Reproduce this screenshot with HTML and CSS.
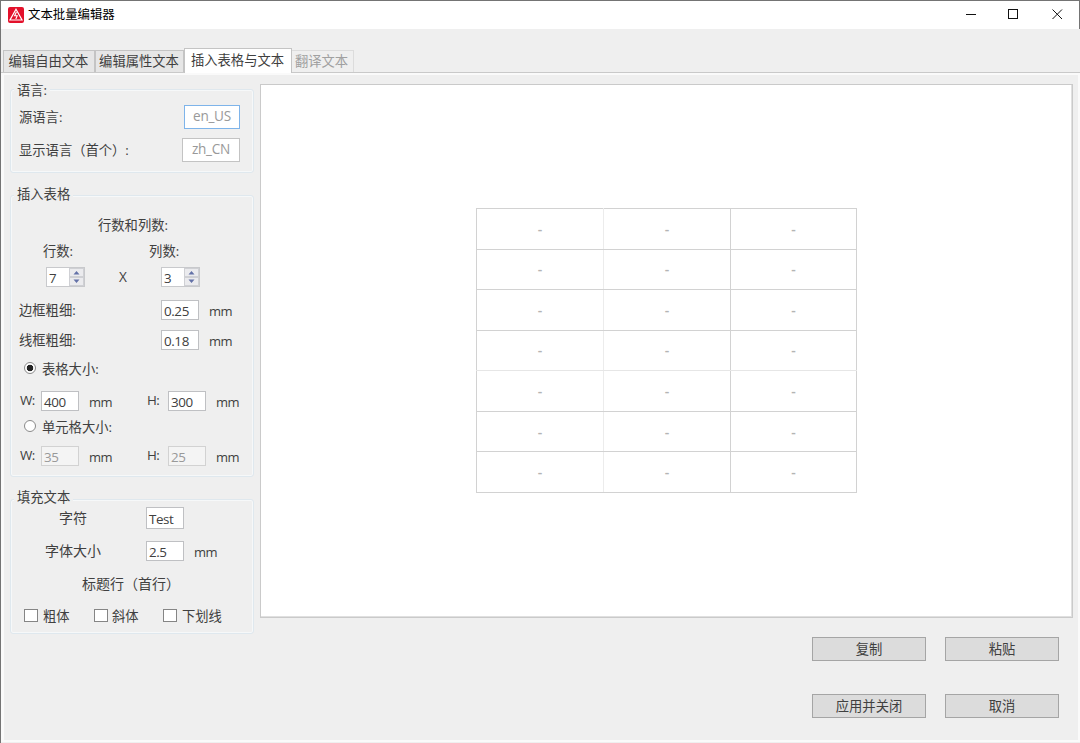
FILE: index.html
```html
<!DOCTYPE html>
<html lang="zh-CN">
<head>
    <meta charset="UTF-8">
    <meta name="viewport" content="width=device-width, initial-scale=1.0">
    <title>文本批量编辑器</title>
    <link rel="stylesheet" href="styles.css">
</head>
<body>
    <div class="window">
        <header class="titlebar">
            <svg class="logo" width="16" height="16" viewBox="0 0 16 16">
                <rect width="16" height="16" rx="2" fill="#e3112b"/>
                <path d="M8 2.2 L14 13 H2 Z" fill="none" stroke="#fff" stroke-width="1.2"/>
                <path d="M8.4 5 L6.6 8.8 H9.2 L7.8 12" fill="none" stroke="#fff" stroke-width="1.1"/>
            </svg>
            <span class="title">文本批量编辑器</span>
            <svg class="controls" width="98" height="12" viewBox="0 0 98 12" fill="none" stroke="#111">
                <path d="M0 6.5 H10"/>
                <rect x="42.5" y="1.5" width="9" height="9"/>
                <path d="M86.5 1.5 L96 11 M96 1.5 L86.5 11"/>
            </svg>
        </header>

        <nav class="tabs">
            <span class="tab tab-free">编辑自由文本</span>
            <span class="tab tab-attr">编辑属性文本</span>
            <span class="tab active">插入表格与文本</span>
            <span class="tab disabled">翻译文本</span>
        </nav>

        <main class="panel">
            <aside class="sidebar">
                <section class="group group-lang">
                    <h2>语言:</h2>
                    <div class="row lang">
                        <span>源语言:</span>
                        <span class="lang-box focused">en_US</span>
                    </div>
                    <div class="row lang">
                        <span>显示语言（首个）:</span>
                        <span class="lang-box wide">zh_CN</span>
                    </div>
                </section>

                <section class="group group-table">
                    <h2>插入表格</h2>
                    <div class="row heading">行数和列数:</div>
                    <div class="row counts-label"><span>行数:</span><span>列数:</span></div>
                    <div class="row counts">
                        <span class="spinner">
                            <span class="num">7</span>
                            <svg width="15" height="18" viewBox="0 0 15 18">
                                <path d="M0 0H15V18H0Z" fill="#cfd0d4"/>
                                <path d="M1 1H14V8H1Z M1 10H14V17H1Z" fill="#ebebee"/>
                                <path d="M4.5 6.5 L7.5 3 L10.5 6.5Z M4.5 11.5 L7.5 15 L10.5 11.5Z" fill="#6472a8"/>
                            </svg>
                        </span>
                        <span class="times">X</span>
                        <span class="spinner">
                            <span class="num">3</span>
                            <svg width="15" height="18" viewBox="0 0 15 18">
                                <path d="M0 0H15V18H0Z" fill="#cfd0d4"/>
                                <path d="M1 1H14V8H1Z M1 10H14V17H1Z" fill="#ebebee"/>
                                <path d="M4.5 6.5 L7.5 3 L10.5 6.5Z M4.5 11.5 L7.5 15 L10.5 11.5Z" fill="#6472a8"/>
                            </svg>
                        </span>
                    </div>
                    <div class="row thickness">
                        <span>边框粗细:</span><span class="field">0.25</span><span class="unit">mm</span>
                    </div>
                    <div class="row thickness">
                        <span>线框粗细:</span><span class="field">0.18</span><span class="unit">mm</span>
                    </div>
                    <div class="row option"><span class="radio checked"></span><span>表格大小:</span></div>
                    <div class="row size">
                        <span class="dim">W:</span><span class="field">400</span><span class="unit">mm</span>
                        <span class="dim">H:</span><span class="field">300</span><span class="unit">mm</span>
                    </div>
                    <div class="row option second"><span class="radio"></span><span>单元格大小:</span></div>
                    <div class="row size">
                        <span class="dim">W:</span><span class="field off">35</span><span class="unit">mm</span>
                        <span class="dim">H:</span><span class="field off">25</span><span class="unit">mm</span>
                    </div>
                </section>

                <section class="group group-fill">
                    <h2>填充文本</h2>
                    <div class="row fill chars"><span>字符</span><span class="field">Test</span></div>
                    <div class="row fill font-size">
                        <span>字体大小</span><span class="field">2.5</span><span class="unit">mm</span>
                    </div>
                    <div class="row header-row">标题行（首行）</div>
                    <div class="row checks">
                        <span class="check"></span><span>粗体</span>
                        <span class="check"></span><span>斜体</span>
                        <span class="check"></span><span>下划线</span>
                    </div>
                </section>
            </aside>

            <div class="content">
                <div class="preview">
                    <table>
                        <tr><td>-</td><td>-</td><td>-</td></tr>
                        <tr><td>-</td><td>-</td><td>-</td></tr>
                        <tr><td>-</td><td>-</td><td>-</td></tr>
                        <tr class="faint"><td>-</td><td>-</td><td>-</td></tr>
                        <tr><td>-</td><td>-</td><td>-</td></tr>
                        <tr><td>-</td><td>-</td><td>-</td></tr>
                        <tr><td>-</td><td>-</td><td>-</td></tr>
                    </table>
                </div>
                <div class="buttons">
                    <button type="button">复制</button>
                    <button type="button">粘贴</button>
                    <button type="button">应用并关闭</button>
                    <button type="button">取消</button>
                </div>
            </div>
        </main>
    </div>
</body>
</html>
```
FILE: styles.css
```css
* {
    box-sizing: border-box;
}

body {
    margin: 0;
    font-family: "Open Sans", "Noto Sans CJK SC", sans-serif;
    font-size: 13.3px;
    color: #404040;
    background-color: #efefef;
}

.window {
    width: 1080px;
    height: 743px;
    overflow: hidden;
    border-top: 1px solid #747474;
    border-left: 1px solid #747474;
    background-color: #efefef;
    white-space: nowrap;
}

.titlebar {
    display: flex;
    align-items: center;
    height: 28px;
    padding: 0 15px 0 7px;
    border-right: 1px solid #747474;
    background-color: #fff;
    color: #000;
}

.logo {
    margin-right: 4px;
}

.title {
    margin-top: -2px;
    font-size: 12.4px;
}

.controls {
    margin: -2px 0 0 auto;
}

/* tabs */
.tabs {
    display: flex;
    align-items: flex-end;
    height: 43px;
    margin-top: 1px;
    padding-left: 2px;
    border-bottom: 1px solid #c9c9c9;
}

.tab {
    height: 22px;
    padding-right: 1px;
    line-height: 20px;
    border: 1px solid #c4c4c4;
    border-bottom: 0;
    background-color: #e6e6e6;
    text-align: center;
}

.tab-free {
    width: 92px;
}

.tab-attr {
    width: 89px;
}

.tab.active {
    width: 108px;
    height: 25px;
    line-height: 23px;
    margin-bottom: -1px;
    background-color: #fff;
}

.tab.disabled {
    width: 62px;
    padding-right: 2px;
    border-color: #dcdcdc;
    border-left: 0;
    background-color: #efefef;
    color: #a0a0a0;
}

.panel {
    display: flex;
    height: 669px;
    border: 2px solid #fafafa;
    border-left-width: 3px;
}

/* left column */
.sidebar {
    width: 256px;
    padding: 14px 0 0 6px;
}

.group {
    width: 244px;
    border: 1px solid #dfe8ee;
    border-radius: 3px;
    box-shadow: inset 0 0 0 1px #f6f8f9;
}

.group h2 {
    width: fit-content;
    height: 18px;
    margin: -9px 0 0 3px;
    padding: 0 3px;
    background-color: #efefef;
    font-size: 13.3px;
    font-weight: normal;
    line-height: 18px;
}

.group-lang {
    height: 84px;
}

.group-table {
    height: 282px;
    margin-top: 22px;
}

.group-table h2 {
    margin-top: -11px;
}

.group-fill {
    height: 135px;
    margin-top: 22px;
}

.group-fill h2 {
    margin-top: -12px;
}

.row {
    display: flex;
    align-items: center;
    height: 20px;
    line-height: 18px;
}

.lang {
    justify-content: space-between;
    height: 24px;
    margin-top: 9px;
    padding: 0 13px 0 8px;
}

h2 + .lang {
    margin-top: 6px;
}

.lang-box {
    width: 56px;
    height: 24px;
    border: 1px solid #c3c3c3;
    background-color: #fff;
    color: #999;
    font-size: 13.6px;
    letter-spacing: -0.3px;
    line-height: 20px;
    text-align: center;
}

.lang-box.wide {
    width: 58px;
}

.lang-box.focused {
    border-color: #7eb4ea;
}

.heading {
    margin-top: 12px;
    padding-left: 87px;
}

.counts-label {
    margin-top: 6px;
    padding-left: 32px;
    gap: 76px;
}

.counts {
    margin-top: 6px;
    padding-left: 35px;
}

.spinner {
    display: flex;
    width: 39px;
    height: 20px;
    border: 1px solid #c8c9cc;
    background-color: #fff;
}

.num {
    width: 22px;
    padding-left: 2px;
    font-size: 13.3px;
    line-height: 20px;
}

.times {
    width: 76px;
    font-size: 13.6px;
    text-align: center;
}

.thickness {
    display: grid;
    grid-template-columns: 142px 38px 1fr;
    margin-top: 10px;
    padding-left: 8px;
}

.counts + .thickness {
    margin-top: 13px;
}

.field {
    width: 38px;
    height: 20px;
    padding-left: 2px;
    border: 1px solid #bfc0c3;
    background-color: #fff;
    font-size: 13.4px;
    letter-spacing: -0.4px;
    line-height: 20px;
}

.field.off {
    border-color: #d2d2d2;
    background-color: #f4f4f4;
    color: #999;
}

.unit {
    padding: 2px 0 0 10px;
    font-size: 13px;
    letter-spacing: -0.6px;
}

.option {
    margin-top: 9px;
    padding-left: 13px;
    gap: 6px;
}

.option.second {
    margin-top: 6px;
}

.radio {
    width: 12px;
    height: 12px;
    margin-top: -3px;
    border: 1px solid #8a8a8a;
    border-radius: 50%;
    background-color: #fff;
}

.radio.checked {
    background: radial-gradient(circle, #222 3px, #fff 3.6px);
}

.size {
    display: grid;
    grid-template-columns: 21px 38px 68px 21px 38px 1fr;
    margin-top: 12px;
    padding-left: 9px;
}

.second + .size {
    margin-top: 9px;
}

.dim {
    margin-top: -2px;
    font-size: 13.4px;
    letter-spacing: -0.6px;
}

.fill {
    font-size: 14px;
}

.chars {
    height: 22px;
    margin-top: 1px;
    padding-left: 48px;
    gap: 59px;
}

.chars .field {
    height: 22px;
    line-height: 22px;
}

.font-size {
    margin-top: 12px;
    padding-left: 34px;
    gap: 45px;
}

.font-size .unit {
    margin-left: -45px;
}

.header-row {
    margin-top: 13px;
    padding-left: 71px;
    font-size: 14px;
}

.checks {
    display: grid;
    grid-template-columns: 19px 51px 18px 51px 19px 1fr;
    margin-top: 12px;
    padding-left: 13px;
}

.check {
    width: 14px;
    height: 13px;
    margin-top: -1px;
    border: 1px solid #858585;
    background-color: #fff;
}

/* right column */
.content {
    width: 813px;
    padding-top: 9px;
}

.preview {
    height: 534px;
    padding: 123px 0 0 215px;
    border: 1px solid #cacaca;
    box-shadow: inset -1px -1px #e0e0e0;
    background-color: #fff;
}

.preview table {
    width: 381px;
    height: 285px;
    border-collapse: collapse;
    table-layout: fixed;
    border: 1px solid #c4c4c4;
}

.preview td {
    padding: 0;
    border: 1px solid #d2d2d2;
    color: #b4b4b4;
    font-size: 14px;
    font-weight: 600;
    line-height: 16px;
    text-align: center;
}

.preview td:nth-child(2) {
    width: 127px;
}

.preview td:first-child {
    width: 127px;
    border-right-color: #ececec;
}

.preview .faint td {
    border-bottom-color: #e6e6e6;
}

.buttons {
    display: grid;
    grid-template-columns: 114px 114px;
    justify-content: end;
    gap: 33px 19px;
    margin: 19px 14px 0 0;
}

.buttons button {
    height: 24px;
    padding: 0;
    border: 1px solid #a5a5a5;
    background-color: #dcdcdc;
    color: #404040;
    font-family: inherit;
    font-size: 13.3px;
    line-height: 21px;
}
```
